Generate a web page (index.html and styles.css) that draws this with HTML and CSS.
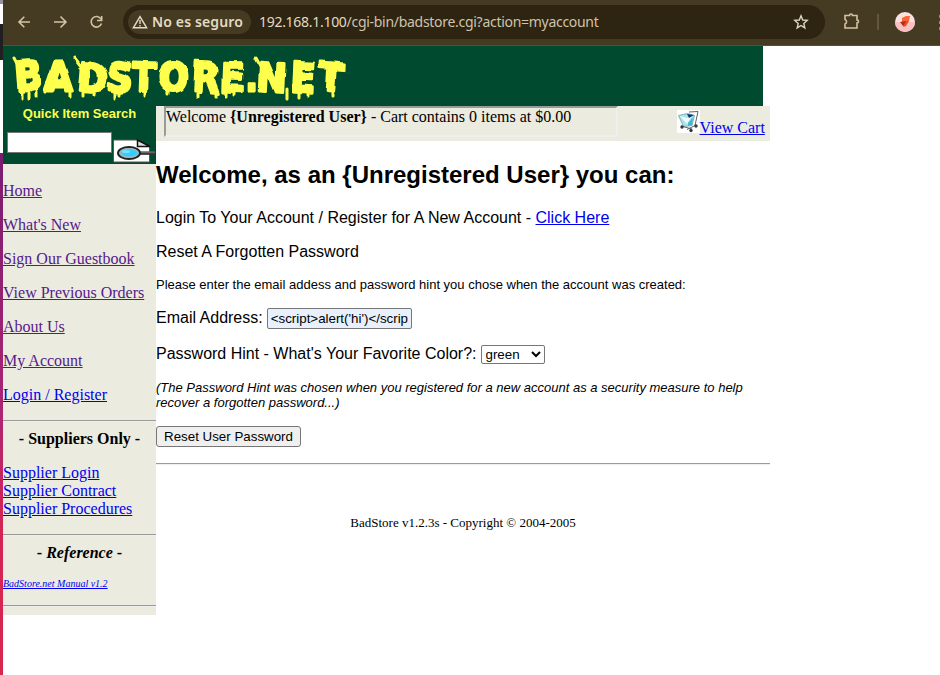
FILE: index.html
```html
<!DOCTYPE html>
<html lang="en">
<head>
<meta charset="utf-8">
<title>BadStore.net</title>
<link rel="stylesheet" href="styles.css">
</head>
<body>
<div class="desktop">
<div class="strip"><i class="s1"></i><i class="s2"></i><i class="s3"></i><i class="s4"></i></div>
<div class="window">
<div class="toolbar">
  <svg class="nav" viewBox="0 0 88 16"><g fill="none" stroke="#d2c3a2" stroke-width="1.6"><path d="M13 8H2.500M7.300 2.800L2 8L7.300 13.200M37 8h11.500M43.500 2.500L49 8l-5.500 5.500"/><path d="M84 5A5.300 5.300 0 1 0 84.500 9.500M84.700 2v4.500H80"/></g></svg>
  <div class="address">
    <div class="security"><svg viewBox="0 0 16 14"><path d="M8 1.600L14.600 12.700H1.400Z" fill="none" stroke="#e5dac2" stroke-width="1.5"/><path d="M8 5v4M8 10v1.500" stroke="#e5dac2" stroke-width="1.400"/></svg><b>No es seguro</b></div>
    <span class="url">192.168.1.100<em>/cgi-bin/badstore.cgi?action=myaccount</em></span>
    <svg class="star" viewBox="0 0 16 16"><path d="M8 1.800L9.700 6l4.500.4-3.400 3 1 4.500L8 11.500l-3.800 2.400 1-4.500-3.400-3L6.300 6Z" fill="none" stroke="#e0d4bd" stroke-width="1.400"/></svg>
  </div>
  <svg class="puzzle" viewBox="0 0 18 18"><path d="M2 3.500h4.500a1.500 1.500 0 0 1 3 0H14v4.500a1.500 1.500 0 0 1 0 3V16H2v-4a2.400 2.400 0 0 0 0-4.500Z" fill="none" stroke="#d2c3a2" stroke-width="1.600"/></svg>
  <i class="divider"></i>
  <svg class="avatar" viewBox="0 0 20 20"><circle cx="10" cy="10" r="10" fill="#fbe0e1"/><path d="M0 10h20A10 10 0 0 1 0 10" fill="#fabfc0"/><path d="M7 6l4-2 4 0-1 5-3 3-4-2Z" fill="#ff6338"/><path d="M5 10l6-1 0 4-3 1Z" fill="#a8301d"/><path d="M11 9l3 0-3 5-3 1Z" fill="#e94b27"/></svg>
  <div class="dots"><i></i><i></i><i></i></div>
</div>
<div class="page">
<header class="banner">
<svg class="logo" viewBox="0 0 360 60" role="img" aria-label="BadStore.net">
<defs><filter id="drip" x="-5%" y="-10%" width="110%" height="130%"><feTurbulence type="fractalNoise" baseFrequency=".08 .05" numOctaves="1" seed="4"/><feDisplacementMap in="SourceGraphic" scale="6" xChannelSelector="R" yChannelSelector="G"/></filter></defs>
<g filter="url(#drip)"><text class="letters" transform="translate(0 45) scale(1.04 1.140)" x="12 40 71 99 123 149 181 208 232 243 276 303" rotate="-5 0 5 3 2 0 3 2 0 3 3 4">BADSTORE.NET</text>
<path class="drips" d="M19 44v7M26 46v6M33 44v6M67 42v9M80 45v6M91 45v4M111 46v6M116 45v4M142 41v9M165 44v5M195 44v6M213 43v7M224 45v5M232 45v4M284 43v9M297 45v6M305 45v4M329 43v8M11 12l7 13M71 12l7 9M252 12l5 9"/></g>
</svg>
</header>
<div class="columns">
<aside>
<div class="search"><b>Quick Item Search</b><div class="searchrow"><input type="text" aria-label="Quick Item Search"><svg class="glass" viewBox="0 0 43 24"><path d="M1.500 1h24l12 7v15h-36Z" fill="#fff" stroke="#555"/><path d="M25.500 1v6.500H38Z" fill="#ddd" stroke="#111" stroke-width="1.500"/><path d="M27 14h16" stroke="#666" stroke-width="3.500"/><path d="M27 15h16" stroke="#111"/><ellipse cx="17" cy="14" rx="11" ry="6" fill="#34cfff" stroke="#222" stroke-width="2"/><ellipse cx="17" cy="14" rx="9" ry="4.300" fill="none" stroke="#a8b5b8" stroke-width="1.500"/><ellipse cx="14" cy="12.500" rx="4" ry="1.500" fill="#78e2ff"/></svg></div></div>
<nav>
<p><a class="seen" href="#">Home</a></p><p><a class="seen" href="#">What's New</a></p><p><a class="seen" href="#">Sign Our Guestbook</a></p><p><a class="seen" href="#">View Previous Orders</a></p><p><a class="seen" href="#">About Us</a></p><p><a class="seen" href="#">My Account</a></p><p><a href="#">Login / Register</a></p>
<hr><h3>- Suppliers Only -</h3>
<div class="suppliers"><a href="#">Supplier Login</a><br><a href="#">Supplier Contract</a><br><a href="#">Supplier Procedures</a></div>
<hr><h3>- <i>Reference</i> -</h3>
<div class="manual"><a href="#">BadStore.net Manual v1.2</a></div><hr>
</nav>
</aside>
<main>
<div class="cartbar"><div class="greeting">Welcome <b>{Unregistered User}</b> - Cart contains 0 items at $0.00</div><div class="cart"><svg viewBox="0 0 23 23"><path fill="#fff" d="M0 0h23v23H0z"/><path d="M1.500 5.500l9-2 7 2-2.500 10-8.500 1Z" fill="#a9e5f1" stroke="#739ba6" stroke-width=".8"/><path d="M3 6l7 2 5-2-5 8Z" fill="#effcff"/><path d="M10 4l7 1-5 3Z" fill="#17366e"/><path d="M12 2l9-.5-3 14-8 4M4 16l11 3" fill="none" stroke="#59666a"/><path d="M11 13l5-6-1 8-4 1Z" fill="#45b8cf"/><g fill="#34393b"><circle cx="5" cy="17" r="1.700"/><circle cx="14" cy="20.500" r="1.700"/><circle cx="19" cy="16" r="1.700"/></g></svg><a href="#">View Cart</a></div></div>
<div class="content">
<h2>Welcome, as an {Unregistered User} you can:</h2>
<p>Login To Your Account / Register for A New Account - <a href="#">Click Here</a></p>
<p>Reset A Forgotten Password</p>
<p class="small">Please enter the email addess and password hint you chose when the account was created:</p>
<p class="email">Email Address: <input type="text" value="&lt;script&gt;alert('hi')&lt;/script&gt;"></p>
<p class="hint">Password Hint - What's Your Favorite Color?: <select><option>green</option></select></p>
<p class="small note">(The Password Hint was chosen when you registered for a new account as a security measure to help recover a forgotten password...)</p>
<button>Reset User Password</button>
<hr>
</div>
<footer>BadStore v1.2.3s - Copyright © 2004-2005</footer>
</main>
</div>
</div>
</div>
</div>
</body>
</html>
```
FILE: styles.css
```css
* { box-sizing: border-box; }
body { margin: 0; background: #fff; font: 16px/18px "Liberation Serif", serif; color: #000; overflow: hidden; }
.desktop { display: flex; height: 675px; }
.strip { width: 3px; flex: none; display: flex; flex-direction: column; }
.s1 { height: 24px; background: #fff; border-top: 4px solid #9791a0; }
.s2 { height: 36px; background: #202020; }
.s3 { height: 93px; background: #fff; }
.s4 { flex: 1; background: linear-gradient(#791c70, #a92573 48%, #d32554 70%, #d8264e); }
.window { flex: 1; min-width: 0; }
.toolbar { height: 46px; background: #453b23; border-bottom: 1px solid #5c4c3c; display: flex; padding-top: 5px; align-items: flex-start; overflow: hidden; }
.nav { width: 88px; height: 16px; margin: 9px 0 0 14px; flex: none; }
.address { width: 702px; height: 34px; margin-left: 18px; padding: 5px; border-radius: 17px; background: #2d2411; display: flex; align-items: center; flex: none; font-family: "Noto Sans", sans-serif; color: #e5dac2; }
.security { width: 123px; height: 24px; border-radius: 12px; background: #453b23; display: flex; align-items: center; padding-left: 4px; gap: 4px; font-size: 14px; white-space: nowrap; flex: none; }
.security svg { width: 16px; height: 14px; flex: none; }
.security b { font-weight: 600; letter-spacing: .14px; }
.url { margin-left: 8px; font-size: 14px; letter-spacing: -.29px; white-space: nowrap; }
.url em { font-style: normal; color: #cfc3ab; }
.star { width: 16px; height: 16px; margin-left: auto; margin-right: 11px; }
.puzzle { width: 18px; height: 18px; margin: 7px 0 0 18px; flex: none; }
.divider { width: 2px; height: 16px; margin: 9px 0 0 16px; background: #64563a; flex: none; }
.avatar { width: 20px; height: 20px; margin: 7px 0 0 16px; flex: none; }
.dots { margin: 10px 0 0 24px; display: flex; flex-direction: column; gap: 3px; }
.dots i { width: 3px; height: 3px; background: #958768; }
.banner { width: 760px; height: 60px; background: #004b2f; }
.logo { width: 360px; height: 60px; display: block; }
.letters { font: 900 35px "DejaVu Sans", sans-serif; fill: #ffff4d; stroke: #ffff4d; stroke-width: 2.5; stroke-linejoin: round; }
.drips { stroke: #ffff4d; stroke-width: 3; stroke-linecap: round; }
.columns { display: flex; align-items: flex-start; width: 767px; }
aside { width: 153px; height: 509px; background: #ebebe0; flex: none; }
.search { height: 58px; background: #004b2f; color: #ffff4d; text-align: center; font: bold 13px/15px "Liberation Sans", sans-serif; }
.searchrow { display: flex; padding-left: 4px; text-align: left; }
.search > b { display: block; height: 26px; }
.searchrow input { width: 105px; height: 21px; border: 1px solid #767676; flex: none; }
.glass { width: 43px; height: 24px; margin-top: 7px; flex: none; }
a { color: #0000ee; }
a.seen { color: #551a8b; }
nav { padding-top: 18px; }
nav p { margin: 0 0 16px; height: 18px; white-space: nowrap; }
hr { margin: 0; border: 0; border-top: 1px solid #9a9a9a; border-bottom: 1px solid #eee; height: 2px; }
h3 { font-size: 16px; line-height: 18px; text-align: center; margin: 8px 0 16px; }
.suppliers { height: 70px; }
.manual { font: italic 10px/12px "Liberation Serif", serif; height: 27px; }
main { width: 614px; flex: none; }
.cartbar { height: 35px; background: #ebebe0; display: flex; padding-left: 8px; }
.greeting { width: 454px; height: 31px; border: 2px solid; border-color: #9a9a9a #eee #eee #9a9a9a; white-space: nowrap; }
.cart { margin-left: 59px; display: flex; white-space: nowrap; padding-top: 4px; }
.cart svg { width: 23px; height: 23px; flex: none; }
.cart a { margin: 9px 0 0 -.4px; }
.content { font-family: "Liberation Sans", sans-serif; }
h2 { font-size: 24px; line-height: 28px; margin: 20px 0; }
.content p { margin: 0 0 16px; }
.content .small { font-size: 13px; line-height: 15px; }
.content .email { height: 21px; line-height: 19px; display: flex; gap: 4px; }
.email input { width: 145px; height: 21px; padding: 1px 3px; border: 1px solid #767676; border-radius: 2px; background: #e8f0fe; font: 13.333px "Liberation Sans", sans-serif; }
.content .hint { height: 19px; display: flex; gap: 4px; line-height: 17px; }
select { width: 64px; height: 19px; padding: 0; border: 1px solid #767676; border-radius: 2px; background: #fff; color: #000; font: 13.333px "Liberation Sans", sans-serif; }
.content .note { font-style: italic; }
button { display: block; width: 145px; height: 21px; padding: 0; border: 1px solid #767676; border-radius: 3px; background: #efefef; color: #000; font: 13.333px "Liberation Sans", sans-serif; }
button + hr { margin-top: 16px; }
footer { margin-top: 50px; text-align: center; font-size: 13px; line-height: 15px; }
```
